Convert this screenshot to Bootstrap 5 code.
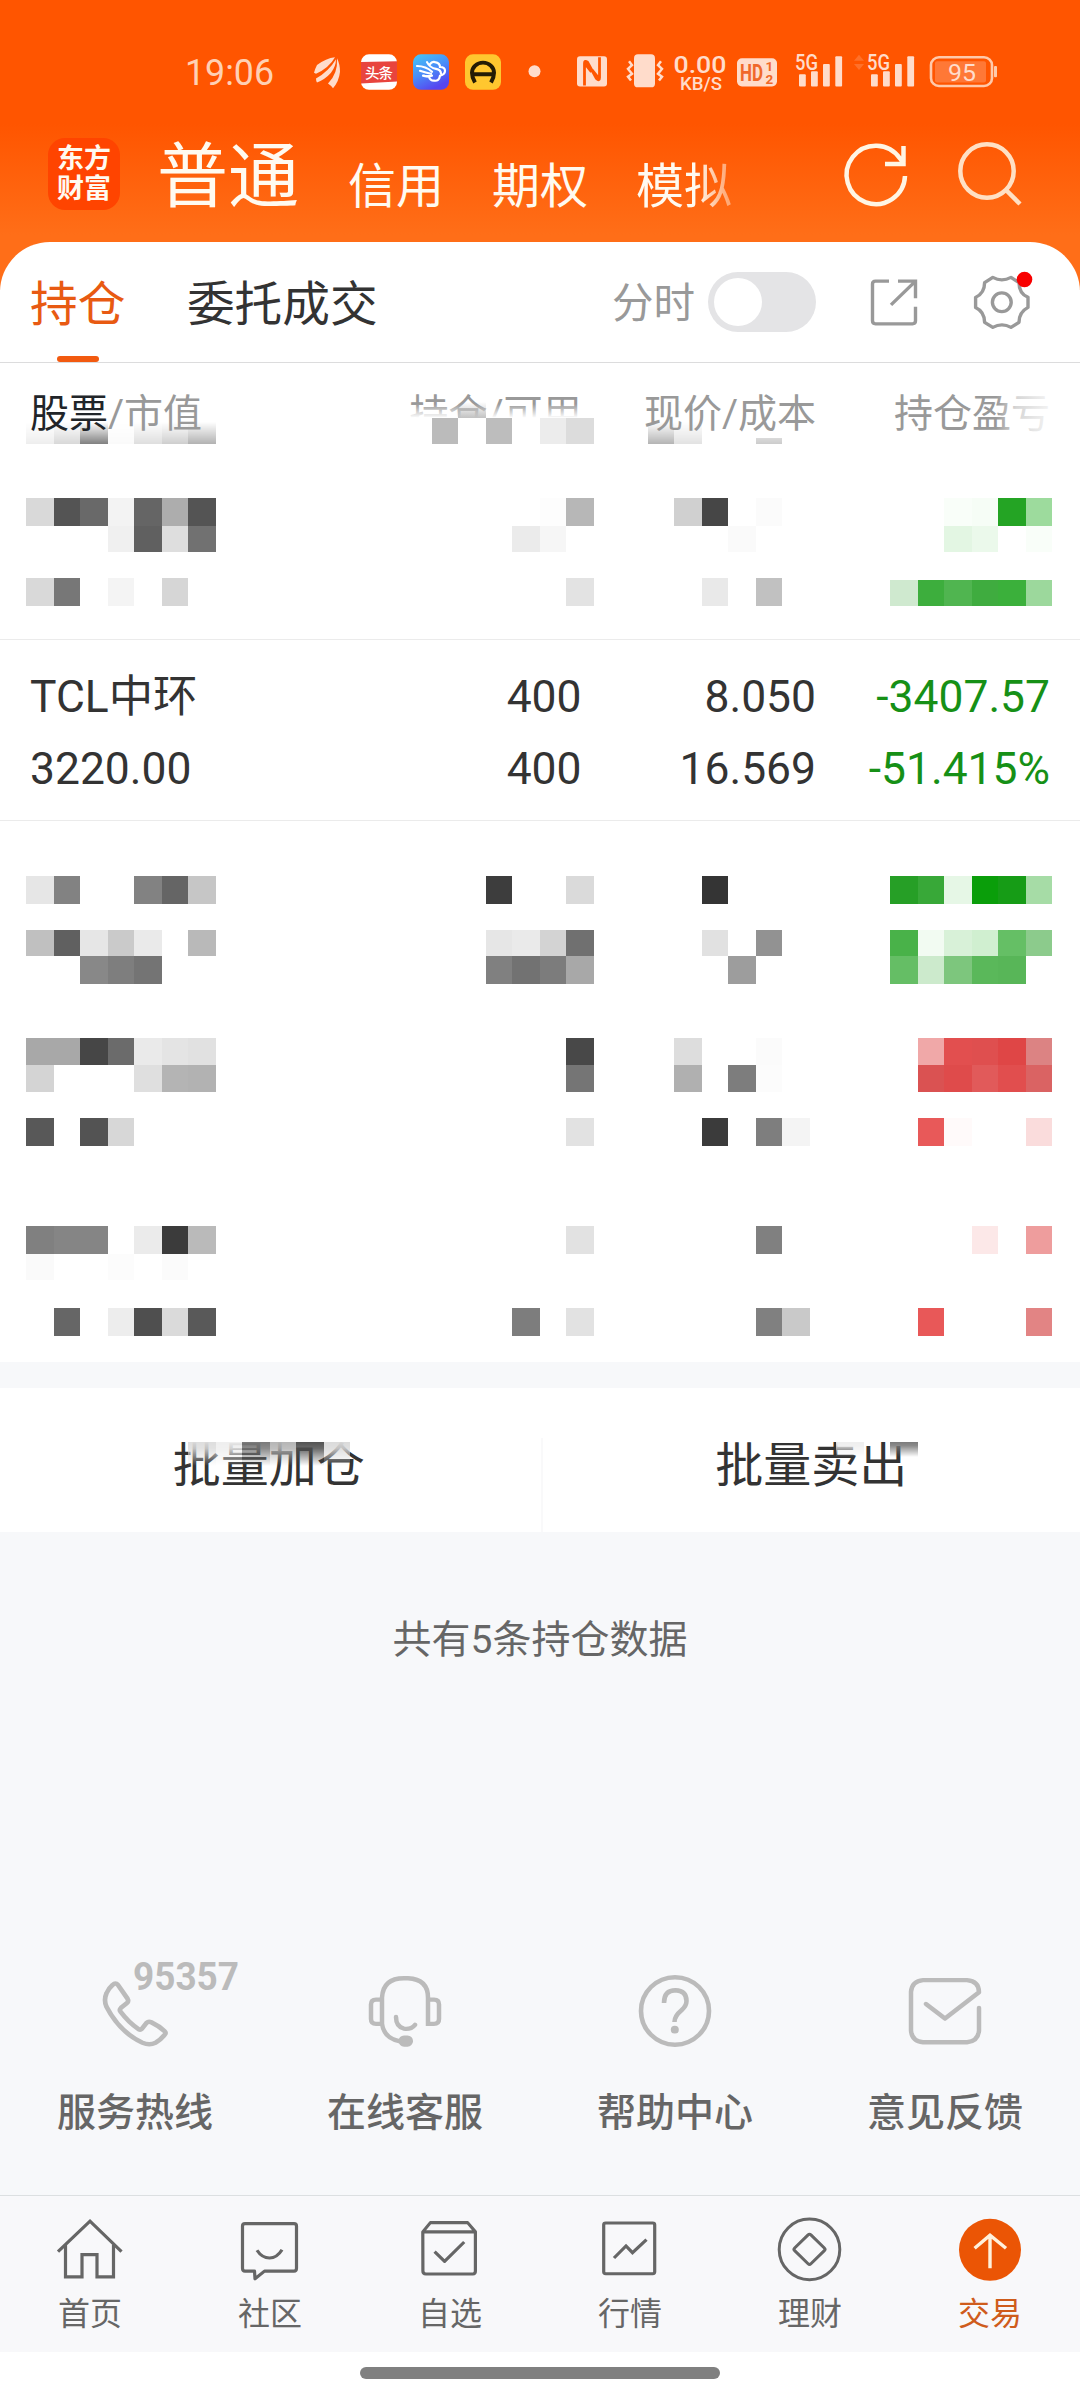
<!DOCTYPE html>
<html lang="zh-CN">
<head>
<meta charset="utf-8">
<meta name="viewport" content="width=device-width, initial-scale=1">
<title>持仓</title>
<link href="https://cdn.jsdelivr.net/npm/bootstrap@5.3.0/dist/css/bootstrap.min.css" rel="stylesheet">
<style>
body{width:1080px;height:2400px;background:#f7f8fa;color:#333;font-family:Roboto,"Noto Sans CJK SC",sans-serif;overflow:hidden}
svg{display:block;overflow:visible;flex:none}
svg text{font-family:Roboto,"Noto Sans CJK SC",sans-serif}
.top-area{height:290px;background:linear-gradient(#ff5500 0,#ff5500 124px,#ff6e18 235px,#ff6e18 100%)}
.status-bar{height:132px}
.account-bar{height:110px;color:#fffaf0}
.brand-tile{width:72px;height:72px;margin:6px 0 0 48px;border-radius:17px;background:#ff4400;font-size:27px;line-height:30px;font-weight:700}
.acct-main{font-size:71px;line-height:80px;margin:5px 0 0 37px;width:191px}
.acct-tab{font-size:48px;line-height:60px;width:144px;margin-top:25px}
.fade-end{-webkit-mask-image:linear-gradient(90deg,#000 60px,rgba(0,0,0,.45) 92px);mask-image:linear-gradient(90deg,#000 60px,rgba(0,0,0,.45) 92px)}
.sheet{margin-top:-48px;border-radius:50px 50px 0 0;background:#fff}
.tab-row{height:121px;border-bottom:1px solid #dcdcdd}
.tab-txt{font-size:47.700px;line-height:60px;margin-top:33px}
.tab-on{color:#e85a12;margin-left:30px}
.tab-next{margin-left:61.500px}
.tab-on::after{content:"";position:absolute;left:27px;top:81px;width:42px;height:6px;border-radius:3px;background:#f25a10}
.time-lbl{font-size:41.5px;line-height:50px;color:#999;margin-top:37px}
.toggle-pill{width:108px;height:60px;border-radius:30px;background:#e4e4e6;padding:6px;margin:30px 0 0 13px}
.toggle-knob{width:48px;height:48px;border-radius:24px;background:#fff}
.grid4{display:grid;grid-template-columns:351.5px 200px 234.5px 234px;padding:0 30px}
.grid4>div:not(:first-child){text-align:right}
.col-heads{height:107px;font-size:39px;line-height:50px;color:#999;padding-top:26px}
.hold-row{border-bottom:1px solid #ebebeb}
.hold-txt{height:181px;font-size:44.4px;line-height:72px;padding-top:20.500px}
.loss{color:#169016}
.actions{height:144px;margin-top:26px;background:#fff;font-size:48px}
.actions>div{flex:1 1 0;line-height:60px;padding-top:48px}
.actions>.act-left{padding-right:3px;border-right:2px solid #f9f9fa}
.total{height:388px;padding-top:80px;font-size:39px;line-height:56px;color:#666}
.service-row{height:275px;font-size:39px;font-weight:500;color:#666}
.service-row>div{width:270px}
.service-row span{line-height:50px;margin-top:37px}
.tabbar{height:157px;border-top:1px solid #dcdfe1;background:#f8f8fa;font-size:32px;color:#666}
.tabbar>div{width:180px}
.tabbar span{line-height:40px;margin-top:5px}
.home-zone{height:48px;background:#fff;padding-top:15px}
.home-pill{width:360px;height:12px;border-radius:6px;background:#808080}
</style>
</head>
<body>
<header class="top-area">
  <div class="status-bar">
    <svg width="1080" height="132" viewBox="0 0 1080 136" preserveAspectRatio="none" fill="#ffdccb">
      <defs><linearGradient id="sky" x1="0" y1="0" x2=".5" y2="1"><stop offset="0" stop-color="#45c8f5"/><stop offset=".55" stop-color="#4a8cf8"/><stop offset="1" stop-color="#5646f0"/></linearGradient></defs>
      <text x="185" y="87.500" font-size="38" textLength="89" lengthAdjust="spacingAndGlyphs" fill="#ffd0b4">19:06</text>
      <path d="M314 75q1-4 3-8 9-7 18-8-6 11-19 17zM316 81q0 3 1 4 8-3 14-10 5-7 5-14-7 12-20 20zM328 86q3 2 5 5 6-7 7-17 0-8-3-14 1 16-9 26z"/>
      <rect x="361" y="56" width="36" height="36.500" rx="8" fill="#fff"/><path d="M361 64l36-1v21l-36 2z" fill="#e8443e"/>
      <text x="365" y="80.500" font-size="14.500" font-weight="500" fill="#fff" textLength="28">头条</text>
      <rect x="413" y="56" width="36" height="36.500" rx="8" fill="url(#sky)"/>
      <path d="M417 68q9 0 15 6M420 73q6 2 11 3M423 78q4 1 9 0M427 64q3 6 9 7 5 1 5 5M430 66q2-3 5-2 5 1 5 5 5 0 5 4t-5 5q-1 6-6 5-4 0-5-4-3 0-5-1" fill="none" stroke="#fff" stroke-width="2.200" stroke-linecap="round"/>
      <rect x="465" y="56" width="36" height="36.500" rx="8" fill="#ffc72f"/>
      <path d="M475 85q-3-5-3-10a11 10.500 0 0 1 22 0q0 5-3 10M473 76.500h20" fill="none" stroke="#241c05" stroke-width="4"/>
      <ellipse cx="534.500" cy="73.500" rx="6" ry="6.200"/>
      <rect x="577" y="58" width="30" height="31" rx="3"/><path d="M584.500 88V65q0-3 3-1l9 17q3 3 3-1V59M584.500 65l7 9M599 81l-7-9" fill="none" stroke="#ff5500" stroke-width="2.800"/>
      <rect x="634" y="56" width="21" height="34" rx="4"/>
      <path d="M629 63l3 4-4 4 4 5-4 3 3 4M661 63l-3 4 4 4-4 5 4 3-3 4" fill="none" stroke="#ffdccb" stroke-width="2.500"/>
      <text x="673.500" y="75" font-size="25" font-weight="500" textLength="53" lengthAdjust="spacingAndGlyphs">0.00</text>
      <text x="680" y="93" font-size="19.500" font-weight="500" textLength="42" lengthAdjust="spacingAndGlyphs">KB/S</text>
      <rect x="737" y="60" width="40" height="29" rx="5"/>
      <g fill="#f0682a" font-weight="700"><text x="740" y="83" font-size="24" textLength="23" lengthAdjust="spacingAndGlyphs">HD</text><text x="765.500" y="73.500" font-size="13.500">1</text><text x="765.500" y="87" font-size="13.500">2</text></g>
      <g id="sig"><text x="795" y="72" font-size="22" font-weight="500" textLength="23" lengthAdjust="spacingAndGlyphs">5G</text>
      <rect x="799" y="76.500" width="6.800" height="12.500" rx="1"/><rect x="811" y="73.500" width="6.800" height="15.500" rx="1"/><rect x="823" y="66" width="6.800" height="23" rx="1"/><rect x="835.300" y="58" width="6.800" height="31" rx="1"/></g>
      <use href="#sig" x="72"/>
      <path d="M854 62.500l5-6 5 6zM854 66l5 6 5-6z" opacity=".2"/>
      <rect x="931" y="59" width="61" height="29.500" rx="8" fill="none" stroke="#ffc9aa" stroke-width="2.600"/><rect x="935" y="63" width="51" height="22" rx="2" fill="#ff7836"/><rect x="994" y="68" width="3" height="11.500" rx="1" fill="#ffc9aa"/>
      <text x="948" y="83" font-size="25" textLength="28" lengthAdjust="spacingAndGlyphs">95</text>
    </svg>
  </div>
  <div class="account-bar d-flex align-items-start">
    <div class="brand-tile d-flex flex-column align-items-center justify-content-center flex-shrink-0"><span>东方</span><span>财富</span></div>
    <div class="acct-main">普通</div>
    <div class="acct-tab">信用</div><div class="acct-tab">期权</div><div class="acct-tab fade-end">模拟</div>
    <svg class="ms-auto" width="260" height="110" viewBox="820 132 260 110" fill="none" stroke="#fff5e4" stroke-width="4.500">
      <path d="M905 176a29.200 29.200 0 1 1-5-17.500l4 5M903.500 146v18H885"/>
      <g stroke="#ffe0c4"><circle cx="987" cy="171" r="26.700"/><path d="M1005.500 189.500l14.500 14.500"/></g>
    </svg>
  </div>
</header>

<main>
<section class="sheet position-relative">
  <div class="tab-row d-flex align-items-start">
    <div class="tab-txt tab-on position-relative">持仓</div>
    <div class="tab-txt tab-next">委托成交</div>
    <div class="time-lbl ms-auto">分时</div>
    <div class="toggle-pill flex-shrink-0"><div class="toggle-knob"></div></div>
    <svg width="264" height="120" viewBox="816 242 264 124" preserveAspectRatio="none" fill="none" stroke="#999" stroke-width="3.400">
      <path d="M889 282.500h-13.500q-3 0-3 3v38q0 3 3 3h37q3 0 3-3V309M898 282.500h17.500V300M915 283l-24 24"/>
      <path d="M992.800 278.600q9 5 18.200 0l8 5.400q0 11 9 15.200v10.400q-9 5-9 15.400l-8 5.200q-9-5-18.200 0l-8.200-5.200q0-11-9-15.400v-10.400q9-4.500 9-15.200z" stroke-linejoin="round"/><ellipse cx="1001.800" cy="304.300" rx="9.400" ry="9.700"/>
      <ellipse cx="1024.500" cy="280.800" rx="7.800" ry="8" fill="#f80000" stroke="none"/>
    </svg>
  </div>

  <div class="position-relative">
    <svg class="position-absolute top-0 start-0" width="1080" height="107" viewBox="0 363 1080 107">
      <defs><linearGradient id="rise" x1="0" y1="0" x2="0" y2="1"><stop offset="0" stop-color="#fff" stop-opacity="0"/><stop offset="1" stop-color="#fff"/></linearGradient>
      <mask id="fadeDown" maskUnits="userSpaceOnUse" x="0" y="420" width="1080" height="24"><rect y="422" width="1080" height="22" fill="url(#rise)"/></mask></defs>
      <g mask="url(#fadeDown)"><g data-mosaic="heads"></g></g>
    </svg>
    <div class="grid4 col-heads position-relative"><div><span class="text-dark">股票</span>/市值</div><div>持仓/可用</div><div>现价/成本</div><div>持仓盈亏</div></div>
    <svg class="position-absolute top-0 start-0" width="1080" height="107" viewBox="0 363 1080 107">
      <defs>
        <linearGradient id="whiteRight"><stop offset="0" stop-color="#fff" stop-opacity="0"/><stop offset=".35" stop-color="#fff" stop-opacity=".6"/><stop offset="1" stop-color="#fff" stop-opacity=".92"/></linearGradient>
        <linearGradient id="grayDown" x1="0" y1="0" x2="0" y2="1"><stop offset="0" stop-color="#999" stop-opacity="0"/><stop offset="1" stop-color="#999" stop-opacity=".6"/></linearGradient>
      </defs>
      <path d="M405 404h178v14H405z" fill="url(#rise)"/><path d="M405 417.500h178V446H405z" fill="#fff"/>
      <path d="M458 402h28v16h-28z" fill="url(#grayDown)"/>
      <path d="M996 388h58v46h-58z" fill="url(#whiteRight)"/>
      <g data-mosaic="headsTop"></g>
    </svg>
  </div>

  <div class="hold-row"><svg width="1080" height="169" viewBox="0 470 1080 169" data-mosaic="row1"></svg></div>
  <div class="hold-row grid4 hold-txt">
    <div>TCL中环<br>3220.00</div><div>400<br>400</div><div>8.050<br>16.569</div><div class="loss">-3407.57<br>-51.415%</div>
  </div>
  <div><svg width="1080" height="181" viewBox="0 821 1080 181" data-mosaic="row2"></svg></div>
  <div><svg width="1080" height="180" viewBox="0 1002 1080 180" data-mosaic="row3"></svg></div>
  <div><svg width="1080" height="180" viewBox="0 1182 1080 180" data-mosaic="row4"></svg></div>
</section>

<section class="actions d-flex text-center position-relative">
  <div class="act-left">批量加仓</div><div>批量卖出</div>
  <svg class="position-absolute top-0 start-0" width="1080" height="144" viewBox="0 1388 1080 144">
    <defs><linearGradient id="veil" x1="0" y1="0" x2="0" y2="1"><stop offset="0" stop-color="#fff"/><stop offset=".3" stop-color="#fff" stop-opacity=".85"/><stop offset="1" stop-color="#fff" stop-opacity="0"/></linearGradient>
    <mask id="fadeUp" maskContentUnits="userSpaceOnUse" maskUnits="userSpaceOnUse" x="0" y="1430" width="1080" height="60"><rect x="0" y="1441" width="600" height="25" fill="url(#veil)"/><rect x="600" y="1441" width="480" height="16" fill="url(#veil)"/></mask></defs>
    <path d="M170 1430h350v12H170zM560 1430h370v12H560zM536 1388h8v50h-8z" fill="#fff"/>
    <g mask="url(#fadeUp)"><g data-mosaic="act"></g></g>
  </svg>
</section>

<div class="total text-center">共有5条持仓数据</div>

<section class="service-row d-flex">
  <div class="d-flex flex-column align-items-center"><svg width="270" height="131" viewBox="0 1920 270 135" preserveAspectRatio="none" fill="none" stroke="#bbb" stroke-width="4.700" stroke-linejoin="round">
    <path d="M112.500 1987q3-3 5.500 0l9.500 14q1.500 2.500-.5 4.500l-6 5q-2 2-.5 4 8 11 18 18 2 1 3.500-.5l4.500-6q2-2 5-.5 8 4 13 9 2 2 0 4-4 5-9 8-6 3-13 0-23-11-36-37-3-7 0-14 2-5 6-8.500z"/>
    <text x="133" y="1992" font-size="39.500" font-weight="700" fill="#bbb" stroke="none" textLength="106" lengthAdjust="spacingAndGlyphs">95357</text></svg><span>服务热线</span></div>
  <div class="d-flex flex-column align-items-center"><svg width="270" height="131" viewBox="270 1920 270 135" preserveAspectRatio="none" fill="none" stroke="#bbb" stroke-width="4.500" stroke-linecap="round">
    <path d="M382 2027v-27q1-20 22-20h4q20 1 20 20v27h6q5 0 5-5v-15q0-5-5-5h-6M382 2002h-6q-5 0-5 5v15q0 5 5 5h6q2 15 18 18M396 2020q0 10 8 12 7 1 11-4"/><rect x="398.500" y="2039" width="14.500" height="11.500" rx="5.500" fill="#bbb" stroke="none"/></svg><span>在线客服</span></div>
  <div class="d-flex flex-column align-items-center"><svg width="270" height="131" viewBox="540 1920 270 135" preserveAspectRatio="none" fill="none" stroke="#bbb" stroke-width="4.600">
    <ellipse cx="675" cy="2013.700" rx="34" ry="34.800"/><path d="M664 2005.500q0-13 11.500-13 11 .5 11 11 0 5-5 9.500-7 6-7 12"/><circle cx="674.800" cy="2033" r="4" fill="#bbb" stroke="none"/></svg><span>帮助中心</span></div>
  <div class="d-flex flex-column align-items-center"><svg width="270" height="131" viewBox="810 1920 270 135" preserveAspectRatio="none" fill="none" stroke="#bbb" stroke-width="4.500" stroke-linecap="round" stroke-linejoin="round">
    <path d="M979 2010.500V2034q-1 11-12 12h-44q-11-1-12-12v-40q1-11 12-12h44q12 1 12 12.500l-34 27-19-15"/></svg><span>意见反馈</span></div>
</section>

<nav class="tabbar d-flex">
  <div class="d-flex flex-column align-items-center"><svg width="180" height="93" viewBox="0 2196.500 180 96" preserveAspectRatio="none" fill="none" stroke="#666" stroke-width="3.200"><path d="M58 2254l32-31.500 31.500 31.500M65.500 2247v33H82v-23h15v23h16.500v-33"/></svg><span>首页</span></div>
  <div class="d-flex flex-column align-items-center"><svg width="180" height="93" viewBox="180 2196.500 180 96" preserveAspectRatio="none" fill="none" stroke="#666" stroke-width="3.200" stroke-linejoin="round"><path d="M245 2225h49q2.500 0 2.500 2.500V2271q0 3-2.500 3h-29.500l-9.500 8-.5-8H245q-2.500 0-2.500-3v-43.500q0-2.500 2.500-2.500zM257 2252.500q5 8 12.500 8t12.500-8.500"/></svg><span>社区</span></div>
  <div class="d-flex flex-column align-items-center"><svg width="180" height="93" viewBox="360 2196.500 180 96" preserveAspectRatio="none" fill="none" stroke="#666" stroke-width="3.200" stroke-linejoin="round"><path d="M422.800 2233.500l7.600-9.500h37.200l7.800 9.500v40.500q0 3-2.500 3h-47q-3 0-3-3zh52.500M434.600 2254l10 10 19.600-20"/></svg><span>自选</span></div>
  <div class="d-flex flex-column align-items-center"><svg width="180" height="93" viewBox="540 2196.500 180 96" preserveAspectRatio="none" fill="none" stroke="#666" stroke-width="3.200"><rect x="603.700" y="2224.300" width="51" height="52.500" rx="2"/><path d="M614 2260.500l12-12.500 6.500 7 14-13.500"/></svg><span>行情</span></div>
  <div class="d-flex flex-column align-items-center"><svg width="180" height="93" viewBox="720 2196.500 180 96" preserveAspectRatio="none" fill="none" stroke="#666" stroke-width="3"><ellipse cx="809.500" cy="2251.600" rx="30.300" ry="31.300"/><rect x="798" y="2240" width="23" height="23" rx="2" transform="rotate(45 809.500 2251.500)"/></svg><span>理财</span></div>
  <div class="d-flex flex-column align-items-center"><svg width="180" height="93" viewBox="900 2196.500 180 96" preserveAspectRatio="none" fill="none" stroke="#fff1dc" stroke-width="3.400"><ellipse cx="990" cy="2252" rx="31" ry="32" fill="#eb5505" stroke="none"/><path d="M990 2237v34M974.600 2250.500L990 2237l16 13.500"/></svg><span style="color:#cf5c1c">交易</span></div>
</nav>
<div class="home-zone"><div class="home-pill mx-auto"></div></div>
</main>

<script src="https://cdn.jsdelivr.net/npm/bootstrap@5.3.0/dist/js/bootstrap.bundle.min.js"></script>
<script>
// Privacy mosaic: each strip is [top, height, "column:colour ..."] on a 27px column pitch.
const mosaic = {
  heads: [[422,22,"1:eeeeee 2:d8d8d8 3:808080 4:fafafa 5:dedede 6:cecece 7:b2b2b2 24:b4b4b4 25:e2e2e2"],[438,6,"28:cccccc"]],
  headsTop: [[418,26,"16:bbbbbb 18:bdbdbd 20:ececec 21:dcdcdc"]],
  row1: [[498,28,"1:d9d9d9 2:545454 3:696969 4:f3f3f3 5:656565 6:adadad 7:545454 20:fdfdfd 21:b7b7b7 25:d0d0d0 26:464646 28:fbfbfb 35:f9fef9 36:f6fdf6 37:24a424 38:9ddb9d"],
    [526,26,"4:f0f0f0 5:606060 6:dedede 7:717171 19:ebebeb 20:f6f6f6 27:fafafa 35:e3f6e3 36:ebf9eb 38:f9fef9"],
    [578,28,"1:d9d9d9 2:777777 4:f4f4f4 6:d6d6d6 21:e3e3e3 26:e9e9e9 28:c1c1c1"],
    [580,26,"33:cfe9cf 34:3dae3d 35:50b550 36:3fac3f 37:3bb03b 38:9cd89c"]],
  row2: [[876,28,"1:e6e6e6 2:828282 5:828282 6:656565 7:c6c6c6 18:3d3d3d 21:dadada 26:343434 33:269f26 34:38a838 35:e6f7e6 36:0a9e0a 37:169c16 38:a6dca6"],
    [930,26,"1:c0c0c0 2:606060 3:e6e6e6 4:cacaca 5:eaeaea 7:b9b9b9 18:e6e6e6 19:eaeaea 20:d3d3d3 21:707070 26:e1e1e1 28:929292 33:49b249 34:f2fbf2 35:d8f1d8 36:d0efd0 37:65bf65 38:8ccb8c"],
    [956,28,"3:888888 4:7e7e7e 5:747474 18:808080 19:727272 20:7c7c7c 21:a8a8a8 27:9d9d9d 33:65be65 34:cceacc 35:7dc67d 36:5ab85a 37:58b658"]],
  row3: [[1038,27,"1:a8a8a8 2:a8a8a8 3:464646 4:6b6b6b 5:eaeaea 6:e4e4e4 7:e1e1e1 21:484848 25:dddddd 28:fbfbfb 34:f0a8a8 35:e24f4f 36:df4f4f 37:df4646 38:dc8383"],
    [1065,27,"1:d4d4d4 5:dfdfdf 6:b4b4b4 7:b2b2b2 21:757575 25:b0b0b0 27:7d7d7d 28:fcfcfc 34:da5252 35:df4b4b 36:e15a5a 37:e14e4e 38:da6363"],
    [1118,28,"1:585858 3:535353 4:d7d7d7 21:e2e2e2 26:3b3b3b 28:7e7e7e 29:f4f4f4 34:e85959 35:fffafa 38:fadcdc"]],
  row4: [[1226,28,"1:808080 2:858585 3:858585 5:ebebeb 6:3b3b3b 7:bababa 21:e2e2e2 28:808080 36:fce8e8 38:ee9d9d"],
    [1254,26,"1:fafafa 4:fcfcfc 6:fbfbfb"],
    [1308,28,"2:666666 4:ededed 5:4f4f4f 6:dadada 7:595959 19:7d7d7d 21:e2e2e2 28:808080 29:c9c9c9 34:e85858 38:e28484"]],
  act: [[1442,26,"7:dddddd 8:eeeeee 9:777777 10:b4b4b4 11:505050 12:dadada 31:eeeeee 33:777777"]]
};
const edge = k => 2 * Math.floor(27 * k / 2);
document.querySelectorAll("[data-mosaic]").forEach(host => {
  for (const [y, h, cells] of mosaic[host.dataset.mosaic]) for (const cell of cells.split(" ")) {
    const [k, fill] = cell.split(":");
    const r = document.createElementNS("http://www.w3.org/2000/svg", "rect");
    const box = {x: edge(+k), y, width: edge(+k + 1) - edge(+k), height: h, fill: "#" + fill};
    for (const a in box) r.setAttribute(a, box[a]);
    host.appendChild(r);
  }
});
</script>
</body>
</html>
